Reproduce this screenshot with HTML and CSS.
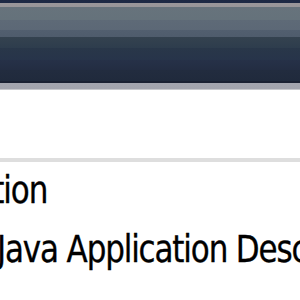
FILE: index.html
```html
<!DOCTYPE html>
<html>
<head>
<meta charset="utf-8">
<link rel="stylesheet" href="styles.css">
</head>
<body>
<div class="window">
  <div class="titlebar"></div>
  <div class="pane"></div>
  <div class="divider"></div>
  <ul class="list">
    <li class="item item-first"><span class="label">Java Application</span></li>
    <li class="item item-second"><span class="label">Java Application Descriptor</span></li>
  </ul>
</div>
</body>
</html>
```

FILE: styles.css
```css
html, body {
  margin: 0;
  padding: 0;
  background: #ffffff;
  overflow: hidden;
}
.window {
  width: 300px;
  height: 300px;
  overflow: hidden;
  display: flex;
  flex-direction: column;
}
.titlebar {
  height: 90px;
  flex: none;
  background: linear-gradient(to bottom,
    #1d2944 0px, #1e2a45 3px,
    #9a979a 3px, #989699 7px,
    #67737c 7px, #65727b 20px,
    #5e6a77 20px, #5c6876 30px,
    #525f6f 30px, #4f5c6c 37px,
    #34424f 37px, #2e3d4d 48px,
    #293749 48px, #27344a 60px,
    #263148 60px, #232d42 70px,
    #222c3f 70px, #202a3c 81px,
    #1b2132 81px, #1b2132 83px,
    #a4a5ae 83px, #a3a4ad 89px,
    #c9c9cd 89px, #c9c9cd 90px);
}
.pane {
  height: 68px;
  flex: none;
}
.divider {
  height: 4px;
  flex: none;
  background: #dedede;
}
.list {
  list-style: none;
  margin: 0;
  padding: 1px 0 0 0;
}
.item {
  height: 59px;
  line-height: 59px;
  white-space: nowrap;
  font-family: "DejaVu Sans", Verdana, sans-serif;
  font-size: 31px;
  letter-spacing: -1.15px;
  color: #000;
  -webkit-text-stroke: 0.3px #000;
}
.label {
  display: inline-block;
  transform: scaleY(1.2);
  transform-origin: 0 40px;
}
.item-first .label {
  margin-left: -183px;
}
.item-second .label {
  margin-left: -3px;
}
```
